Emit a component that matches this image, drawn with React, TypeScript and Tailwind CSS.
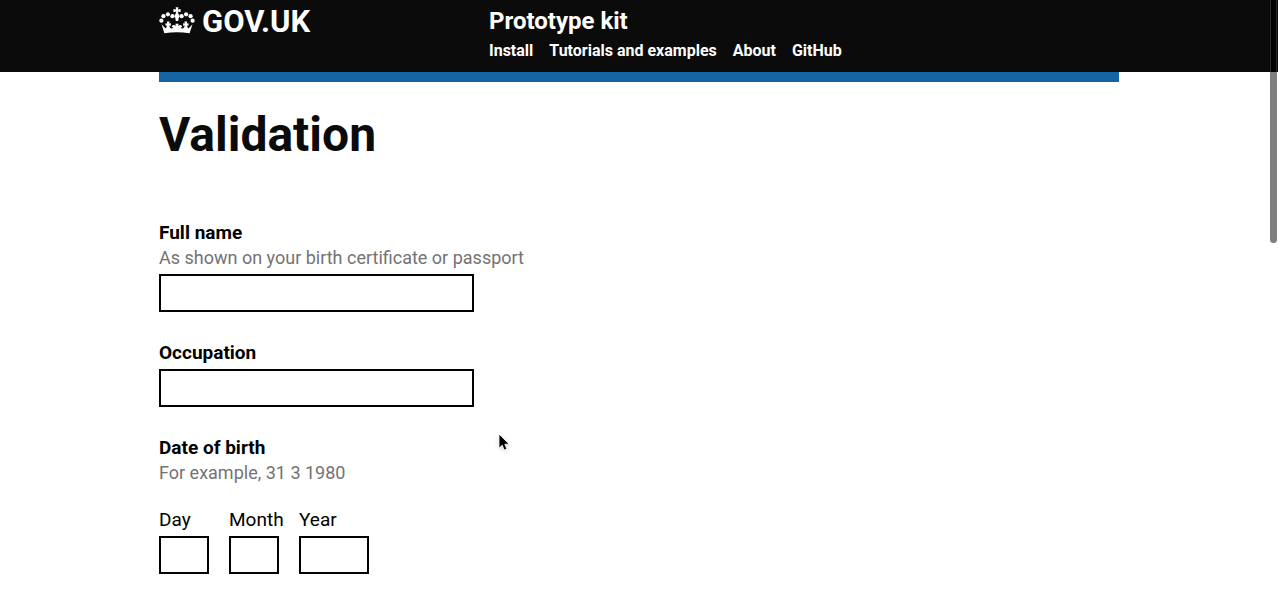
import type { ReactNode } from "react";

const navItems = ["Install", "Tutorials and examples", "About", "GitHub"];

const dateParts = [
  { id: "dob-day", label: "Day", column: "w-[50px]" },
  { id: "dob-month", label: "Month", column: "w-[50px]" },
  { id: "dob-year", label: "Year", column: "w-[70px]" },
];

const inputClass =
  "block h-[38px] rounded-none border-2 border-black bg-white px-1 text-[19px] outline-none";

function Crown() {
  return (
    <svg viewBox="0 0 36 27" className="h-[27px] w-9 shrink-0 fill-white" aria-hidden="true">
      <circle cx="2.4" cy="13.7" r="2.1" />
      <circle cx="4.4" cy="9.2" r="2.1" />
      <circle cx="8.9" cy="7.3" r="2.1" />
      <circle cx="13.4" cy="9.2" r="2.1" />
      <circle cx="22.6" cy="9.2" r="2.1" />
      <circle cx="27.1" cy="7.3" r="2.1" />
      <circle cx="31.6" cy="9.2" r="2.1" />
      <circle cx="33.6" cy="13.7" r="2.1" />
      <path d="M16.6 0.2h2.8l-.5 2.4 2.7-.6v3.2l-2.7-.6.5 2.4a2.5 2.5 0 0 1 .3 3.9l-.5 3h-2.4l-.5-3a2.5 2.5 0 0 1 .3-3.9l.5-2.4-2.7.6v-3.2l2.7.6z" />
      <path d="M5.4 26.2 2.5 17.2l4.1 4.2c.9-1 1.3-2 1.4-3l-1.5.3v-2.4l1.7.3-.4-2h2.8l-.4 2 1.7-.3v2.4l-1.6-.3c.2 1.7 1 2.9 2.2 3.1 1 .2 1.8-.5 1.7-1.5l-1.5.5c0-2 1.4-3 2.9-2.2l1.2.8-.4-2.4h3.2l-.4 2.4 1.2-.8c1.5-.8 2.9.2 2.9 2.2l-1.5-.5c-.1 1 .7 1.7 1.7 1.5 1.2-.2 2-1.4 2.2-3.1l-1.6.3v-2.4l1.7.3-.4-2h2.8l-.4 2 1.7-.3v2.4l-1.5-.3c.1 1 .5 2 1.4 3l4.1-4.2-2.9 9c-8.4-1.2-16.8-1.2-25.2 0z" />
    </svg>
  );
}

function Header() {
  return (
    <header className="bg-[#0b0b0b] text-white">
      <div className="mx-auto flex h-[72px] max-w-[960px] items-start">
        <a href="#home" className="flex w-[330px] shrink-0 items-start gap-[7px] pt-[7px]">
          <Crown />
          <span className="text-[31px] leading-[30px] font-bold">GOV.UK</span>
        </a>
        <div className="pt-2">
          <a href="#kit" className="block text-[24px] leading-[26px] font-bold">
            Prototype kit
          </a>
          <nav className="mt-[7px] flex gap-4 text-[16px] leading-5 font-bold">
            {navItems.map((item) => (
              <a key={item} href="#nav">
                {item}
              </a>
            ))}
          </nav>
        </div>
      </div>
    </header>
  );
}

function Field({ id, label, hint }: { id: string; label: string; hint?: ReactNode }) {
  return (
    <div className="mb-7">
      <label htmlFor={id} className="mb-1 block">
        <span className="block font-bold">{label}</span>
        {hint && <span className="block text-[18px] text-[#737373]">{hint}</span>}
      </label>
      <input id={id} type="text" className={`${inputClass} w-full max-w-[315px]`} />
    </div>
  );
}

export default function App() {
  return (
    <div className="relative min-h-screen bg-white font-['Roboto','Liberation_Sans',sans-serif] text-[19px] leading-[25px] text-black">
      <Header />
      <div className="mx-auto max-w-[960px]">
        <div className="h-[10px] bg-[#1465a1]" />
        <main className="pt-7">
          <h1 className="mb-[60px] text-[48px] leading-[50px] font-bold text-[#0b0b0b]">Validation</h1>
          <form>
            <Field
              id="full-name"
              label="Full name"
              hint="As shown on your birth certificate or passport"
            />
            <Field id="occupation" label="Occupation" />
            <fieldset>
              <legend className="mb-[22px]">
                <span className="block font-bold">Date of birth</span>
                <span className="block text-[18px] text-[#737373]">For example, 31 3 1980</span>
              </legend>
              <div className="flex gap-5">
                {dateParts.map((part) => (
                  <div key={part.id} className={part.column}>
                    <label htmlFor={part.id} className="mb-1 block whitespace-nowrap">
                      {part.label}
                    </label>
                    <input id={part.id} type="text" inputMode="numeric" className={`${inputClass} w-full`} />
                  </div>
                ))}
              </div>
            </fieldset>
          </form>
        </main>
      </div>
      <div className="absolute top-0 right-px h-[243px] w-[7px] rounded-b-full bg-[#7f7f7f]">
        <div className="h-[72px] border-x border-[#2b2b2b] bg-black" />
      </div>
      <svg
        viewBox="0 0 14 20"
        className="absolute top-[432px] left-[497px] h-5 w-[14px] drop-shadow-sm"
        aria-hidden="true"
      >
        <path
          d="M2 2v14.2l3.2-3 2 4.8 2.6-1.1-2-4.7h4.4z"
          fill="#000"
          stroke="#fff"
          strokeWidth="0.8"
        />
      </svg>
    </div>
  );
}
